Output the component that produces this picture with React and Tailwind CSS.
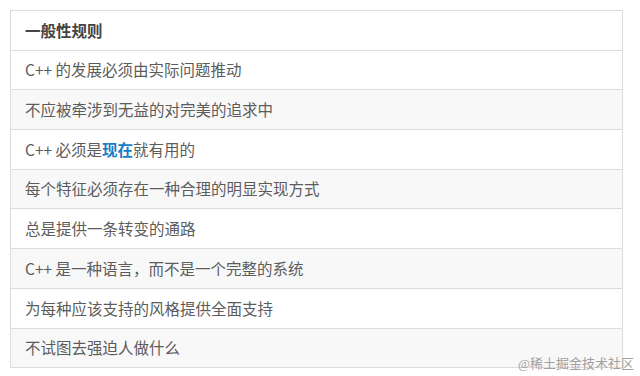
const rows = [
  { text: 'C++ 的发展必须由实际问题推动' },
  { text: '不应被牵涉到无益的对完美的追求中' },
  { pre: 'C++ 必须是', em: '现在', post: '就有用的' },
  { text: '每个特征必须存在一种合理的明显实现方式' },
  { text: '总是提供一条转变的通路' },
  { text: 'C++ 是一种语言，而不是一个完整的系统' },
  { text: '为每种应该支持的风格提供全面支持' },
  { text: '不试图去强迫人做什么' },
]

export default function App() {
  return (
    <div
      className="relative h-[376px] w-[640px] overflow-hidden bg-white pl-[10px] pt-[10px]"
      style={{ fontFamily: '"Noto Sans CJK SC", "Noto Sans", sans-serif' }}
    >
      <div className="w-[613px] border border-[#dcdcdc]">
        <div className="flex h-[38.7px] items-center px-[14px] text-[15.5px] font-bold text-[#444]">
          一般性规则
        </div>
        {rows.map((r, i) => (
          <div
            key={i}
            className={
              'flex h-[39.7px] items-center border-t border-[#dcdcdc] px-[14px] text-[15.5px] text-[#5c5c5c] ' +
              (i % 2 === 1 ? 'bg-[#f8f8f8]' : 'bg-white')
            }
          >
            {r.text ?? (
              <span>
                {r.pre}
                <strong className="font-bold text-[#1a7cc4]">{r.em}</strong>
                {r.post}
              </span>
            )}
          </div>
        ))}
      </div>
      <div
        className="absolute right-[6px] bottom-[6px] text-[13px] leading-none text-[#a0a0a0]"
        style={{ fontFamily: '"Liberation Serif", "Noto Sans CJK SC", serif' }}
      >
        @稀土掘金技术社区
      </div>
    </div>
  )
}
